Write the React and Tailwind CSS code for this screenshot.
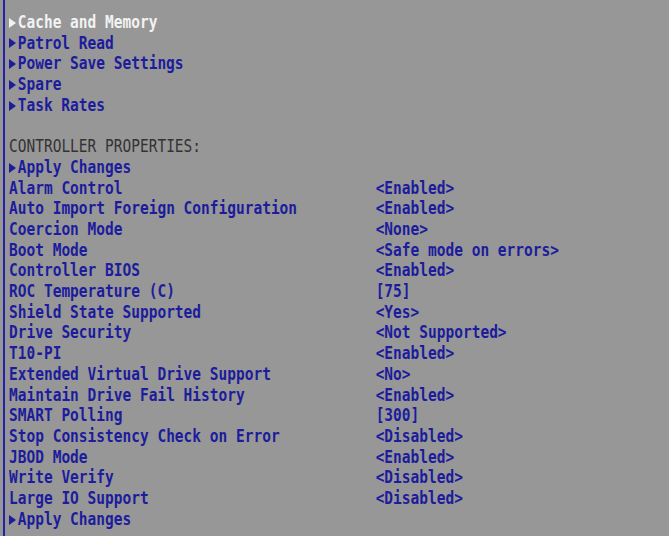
import React from "react";

const top = [
  { t: "Cache and Memory", arrow: true, white: true },
  { t: "Patrol Read", arrow: true },
  { t: "Power Save Settings", arrow: true },
  { t: "Spare", arrow: true },
  { t: "Task Rates", arrow: true },
];

const props = [
  ["Alarm Control", "<Enabled>"],
  ["Auto Import Foreign Configuration", "<Enabled>"],
  ["Coercion Mode", "<None>"],
  ["Boot Mode", "<Safe mode on errors>"],
  ["Controller BIOS", "<Enabled>"],
  ["ROC Temperature (C)", "[75]"],
  ["Shield State Supported", "<Yes>"],
  ["Drive Security", "<Not Supported>"],
  ["T10-PI", "<Enabled>"],
  ["Extended Virtual Drive Support", "<No>"],
  ["Maintain Drive Fail History", "<Enabled>"],
  ["SMART Polling", "[300]"],
  ["Stop Consistency Check on Error", "<Disabled>"],
  ["JBOD Mode", "<Enabled>"],
  ["Write Verify", "<Disabled>"],
  ["Large IO Support", "<Disabled>"],
];

function Arrow({ white }) {
  return (
    <span className="inline-flex w-[1ch] items-center justify-start">
      <svg width="7" height="10" viewBox="0 0 7 10" className="block">
        <polygon points="0,0 7,5 0,10" fill={white ? "#f2f2f2" : "#1c1c9c"} />
      </svg>
    </span>
  );
}

function Row({ children }) {
  return <div className="flex h-[20.71px] items-center whitespace-pre">{children}</div>;
}

function Txt({ children, className = "" }) {
  return <span className={"inline-block origin-center scale-y-[1.2] " + className}>{children}</span>;
}

export default function App() {
  return (
    <div
      className="h-[536px] w-[669px] overflow-hidden bg-[#979797] pl-[3px] text-[14.5px] font-bold text-[#1c1c9c]"
      style={{ fontFamily: '"DejaVu Sans Mono", "Liberation Mono", monospace' }}
    >
      <div className="h-full border-l-2 border-[#2323a6] pl-[4px] pt-[12.4px]">
        {top.map((r) => (
          <Row key={r.t}>
            <Arrow white={r.white} />
            <Txt className={r.white ? "text-[#f2f2f2]" : ""}>{r.t}</Txt>
          </Row>
        ))}
        <Row> </Row>
        <Row>
          <Txt className="font-normal text-[#333333]">CONTROLLER PROPERTIES:</Txt>
        </Row>
        <Row>
          <Arrow />
          <Txt>Apply Changes</Txt>
        </Row>
        {props.map(([l, v]) => (
          <Row key={l}>
            <Txt className="w-[42ch]">{l}</Txt>
            <Txt>{v}</Txt>
          </Row>
        ))}
        <Row>
          <Arrow />
          <Txt>Apply Changes</Txt>
        </Row>
      </div>
    </div>
  );
}
